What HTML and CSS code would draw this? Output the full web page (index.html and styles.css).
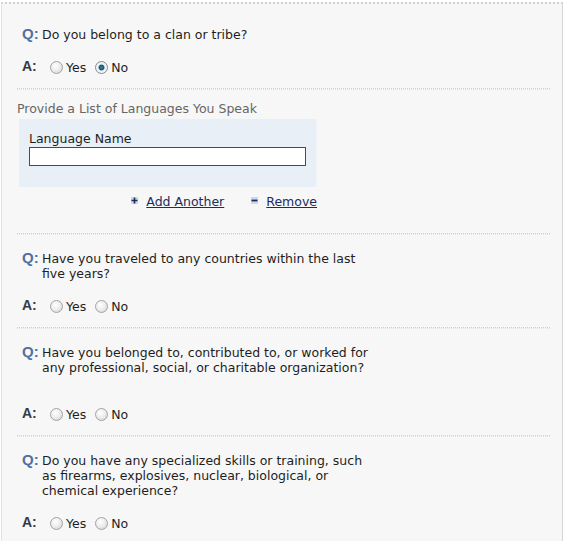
FILE: index.html
```html
<!DOCTYPE html>
<html>
<head>
<meta charset="utf-8">
<link rel="stylesheet" href="styles.css">
</head>
<body>
<div class="frame">
  <div class="qa first">
    <div class="q"><span class="lbl-q">Q:</span><span class="qtext">Do you belong to a clan or tribe?</span></div>
    <div class="a"><span class="lbl-a">A:</span><label class="opt"><input type="radio" name="q1"><span>Yes</span></label><label class="opt"><input type="radio" name="q1" checked><span>No</span></label></div>
  </div>
  <div class="sep"></div>
  <div class="langs">
    <div class="langs-title">Provide a List of Languages You Speak</div>
    <div class="lang-box">
      <label class="lang-label" for="lang">Language Name</label>
      <input class="lang-input" id="lang" type="text">
    </div>
    <div class="lang-actions">
      <a class="act" href="#"><svg class="ico" width="7" height="7" viewBox="0 0 7 7"><rect x="0" y="0" width="7" height="7" fill="#cdd8ea"/><path d="M0.5 3.5H6.5M3.5 0.5V6.5" stroke="#1c2d5c" stroke-width="1.6"/></svg><span>Add Another</span></a>
      <a class="act" href="#"><svg class="ico" width="7" height="7" viewBox="0 0 7 7"><rect x="0" y="0" width="7" height="7" fill="#cdd8ea"/><path d="M0.5 3.5H6.5" stroke="#1c2d5c" stroke-width="1.8"/></svg><span>Remove</span></a>
    </div>
  </div>
  <div class="sep"></div>
  <div class="qa">
    <div class="q"><span class="lbl-q">Q:</span><span class="qtext">Have you traveled to any countries within the last five years?</span></div>
    <div class="a"><span class="lbl-a">A:</span><label class="opt"><input type="radio" name="q2"><span>Yes</span></label><label class="opt"><input type="radio" name="q2"><span>No</span></label></div>
  </div>
  <div class="sep"></div>
  <div class="qa">
    <div class="q"><span class="lbl-q">Q:</span><span class="qtext">Have you belonged to, contributed to, or worked for any professional, social, or charitable organization?</span></div>
    <div class="a a-wide"><span class="lbl-a">A:</span><label class="opt"><input type="radio" name="q3"><span>Yes</span></label><label class="opt"><input type="radio" name="q3"><span>No</span></label></div>
  </div>
  <div class="sep"></div>
  <div class="qa">
    <div class="q"><span class="lbl-q">Q:</span><span class="qtext">Do you have any specialized skills or training, such as firearms, explosives, nuclear, biological, or chemical experience?</span></div>
    <div class="a"><span class="lbl-a">A:</span><label class="opt"><input type="radio" name="q4"><span>Yes</span></label><label class="opt"><input type="radio" name="q4"><span>No</span></label></div>
  </div>
</div>
</body>
</html>
```

FILE: styles.css
```css
html, body {
  margin: 0;
  padding: 0;
  background: #ffffff;
}
body {
  font-family: "DejaVu Sans", Verdana, sans-serif;
  font-size: 12.5px;
  color: #1e1e1e;
}
.frame {
  margin: 2px 2px 0 1px;
  min-height: 560px;
  background: #f7f7f7;
  border-top: 2px dotted #d4d4d4;
  border-left: 1px solid #e2e2e2;
  border-right: 1px solid #d6d6d6;
  padding: 0 15px 0 15px;
  box-sizing: border-box;
  width: 562px;
}
.qa {
  padding: 15px 0 13px 5px;
}
.qa.first {
  padding-top: 22px;
}
.q {
  display: flex;
  align-items: baseline;
  line-height: 15px;
}
.lbl-q {
  font-family: "Liberation Sans", Arial, sans-serif;
  font-weight: bold;
  font-size: 15px;
  color: #52709f;
  width: 20px;
  flex: none;
}
.qtext {
  width: 334px;
}
.a {
  display: flex;
  align-items: center;
  height: 15px;
  margin-top: 18px;
}
.a-wide {
  margin-top: 32px;
}
.lbl-a {
  font-family: "Liberation Sans", Arial, sans-serif;
  font-weight: bold;
  font-size: 14px;
  color: #343a46;
  width: 28px;
  flex: none;
  position: relative;
  top: -2px;
}
.opt {
  display: flex;
  align-items: center;
  margin-right: 9px;
}
.opt span {
  margin-left: 3px;
}
.opt input {
  -webkit-appearance: none;
  appearance: none;
  margin: 0;
  width: 13px;
  height: 13px;
  border-radius: 50%;
  border: 1px solid #a3a3a3;
  background: radial-gradient(circle at 40% 35%, #ffffff 0%, #ececec 50%, #cfcfcf 100%);
  box-sizing: border-box;
}
.opt input:checked {
  border-color: #7d8c99;
  background: radial-gradient(circle at 50% 50%, #3a86aa 0%, #1f4f70 30%, #e8eef2 44%, #f4f6f8 70%, #d0d6dc 100%);
}
.sep {
  height: 2px;
  border-top: 1px dotted #cfcfcf;
  border-bottom: 1px dotted #e4e4e4;
  box-sizing: border-box;
  margin-right: -3px;
}
.langs {
  padding-top: 11px;
  padding-bottom: 24px;
}
.langs-title {
  line-height: 15px;
  color: #666666;
}
.lang-box {
  margin: 3px 0 0 2px;
  width: 298px;
  height: 68px;
  box-sizing: border-box;
  padding: 12px 10px 0 10px;
  background: #e9eff6;
  border-right: 1px solid #f1f5fa;
}
.lang-label {
  display: block;
  line-height: 15px;
  color: #1e1e1e;
}
.lang-input {
  display: block;
  margin: 1px 0 0 0;
  width: 277px;
  height: 19px;
  box-sizing: border-box;
  border: 1px solid #4a4a4a;
  background: #ffffff;
  padding: 0;
  outline: none;
}
.lang-actions {
  display: flex;
  justify-content: flex-end;
  width: 300px;
  margin-top: 7px;
  line-height: 15px;
  gap: 27px;
}
.act {
  display: flex;
  align-items: center;
  color: #1c2d5c;
  text-decoration: underline;
}
.act span {
  margin-left: 8px;
}
.ico {
  flex: none;
  position: relative;
  top: -1px;
}
```
